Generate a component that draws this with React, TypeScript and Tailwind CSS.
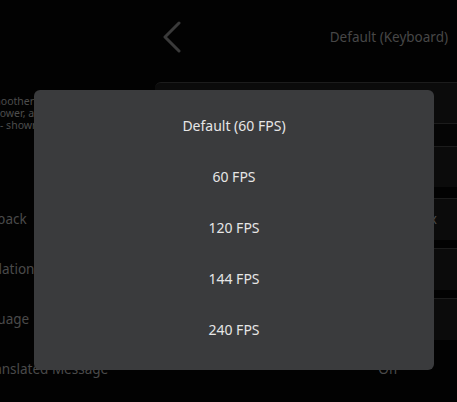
import React from 'react';

const OPTIONS = ['Default (60 FPS)', '60 FPS', '120 FPS', '144 FPS', '240 FPS'];

const ROWS = [
  { label: 'Playback', value: 'x', shift: '-ml-[29px]', pad: 'pr-[20px]' },
  { label: 'Translation', value: '', shift: '-ml-[36px]', pad: 'pr-[20px]' },
  { label: 'Language', value: '', shift: '-ml-[34px]', pad: 'pr-[20px]' },
  { label: 'Translated Message', value: 'Off', shift: '-ml-[18px]', pad: 'pr-[59px]' },
];

const App: React.FC = () => {
  return (
    <div className="relative w-[457px] h-[402px] overflow-hidden bg-[#020202] font-['Noto_Sans',sans-serif]">
      {/* settings page behind the dialog */}
      <div className="flex flex-col">
        <div className="flex h-[74px] items-center">
          <div className="w-[162px]" />
          <svg width="20" height="32" viewBox="0 0 20 32">
            <path d="M17 2 L3 16 L17 30" fill="none" stroke="#3a3a3a" strokeWidth="3" strokeLinecap="round" strokeLinejoin="round" />
          </svg>
          <div className="flex-1" />
          <span className="pr-[9px] text-[13.5px] text-[#474747]">Default (Keyboard)</span>
        </div>

        <div className="flex h-[120px]">
          <div className="w-[155px] overflow-hidden pt-[21px] text-[10.5px] leading-[12px] text-[#4d4d4d]">
            <p className="-ml-[14px] whitespace-nowrap">smoother motion</p>
            <p className="-ml-[3px] whitespace-nowrap">lower, and</p>
            <p className="whitespace-nowrap">- shown</p>
          </div>
          <div className="flex flex-1 flex-col">
            <div className="mt-[8px] h-[41px] rounded-tl-[6px] border-t border-[#1c1c1c] bg-[#0b0b0b]" />
            <div className="h-[23px] border-t border-[#1c1c1c] bg-[#050505]" />
            <div className="h-[41px] border-t border-[#1c1c1c] bg-[#0b0b0b]" />
          </div>
        </div>

        <div className="flex flex-col">
          {ROWS.map((row, idx) => (
            <div key={idx} className="flex h-[50px] items-center">
              <div className="w-[155px] overflow-hidden">
                <span className={`block whitespace-nowrap text-[13.5px] text-[#4a4a4a] ${row.shift}`}>
                  {row.label}
                </span>
              </div>
              <div className={`flex h-[42px] flex-1 items-center justify-end ${row.pad} ${idx < 3 ? 'border-t border-[#1c1c1c] bg-[#0b0b0b]' : ''}`}>
                <span className="text-[13.5px] text-[#4a4a4a]">{row.value}</span>
              </div>
            </div>
          ))}
        </div>
      </div>

      {/* dropdown dialog */}
      <div className="absolute left-[34px] top-[90px] flex h-[280px] w-[400px] flex-col rounded-[6px] bg-[#3a3b3d] pt-[10px]">
        {OPTIONS.map((opt) => (
          <div key={opt} className="flex h-[51px] items-center justify-center text-[14px] text-[#e6e6e6]">
            {opt}
          </div>
        ))}
      </div>
    </div>
  );
};

export default App;
